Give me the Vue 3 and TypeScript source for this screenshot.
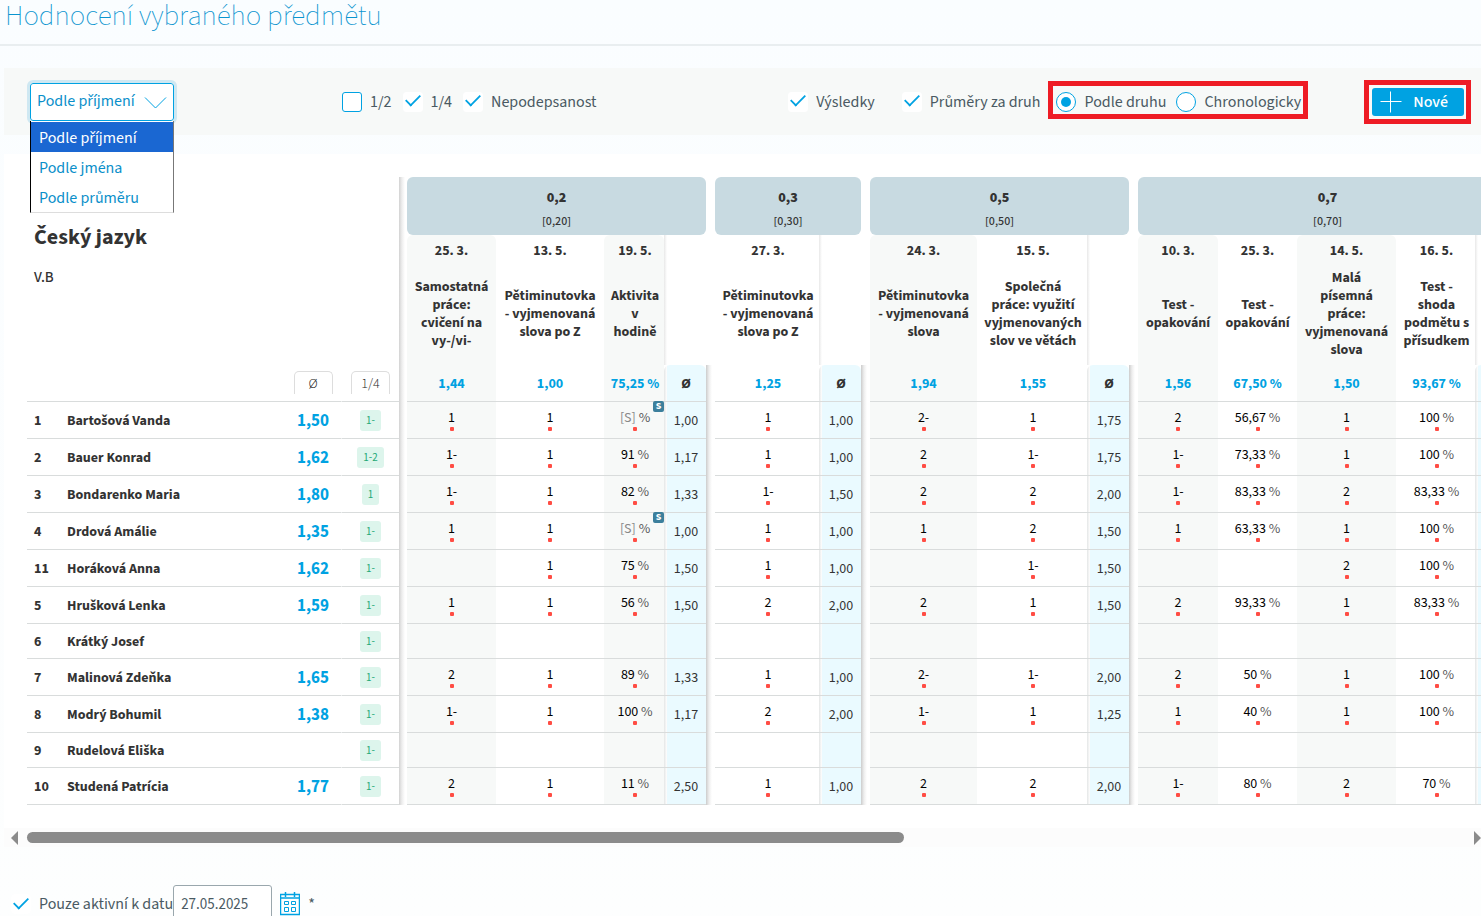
<script setup lang="ts">
import { ref } from 'vue'

interface Column { date: string; title: string; average: string; shaded?: boolean; width: number }
interface Group { weight: string; detail: string; columns: Column[] }
interface Student { no: number; name: string; average: string; quarter: string; grades: string[][]; means: string[] }

const groups: Group[] = [
  {
    weight: '0,2', detail: '[0,20]', columns: [
      { date: '25. 3.', title: 'Samostatná práce: cvičení na vy-/vi-', average: '1,44', shaded: true, width: 89 },
      { date: '13. 5.', title: 'Pětiminutovka\n- vyjmenovaná slova po Z', average: '1,00', width: 108 },
      { date: '19. 5.', title: 'Aktivita v hodině', average: '75,25 %', shaded: true, width: 60 },
    ],
  },
  {
    weight: '0,3', detail: '[0,30]', columns: [
      { date: '27. 3.', title: 'Pětiminutovka\n- vyjmenovaná slova po Z', average: '1,25', width: 104 },
    ],
  },
  {
    weight: '0,5', detail: '[0,50]', columns: [
      { date: '24. 3.', title: 'Pětiminutovka\n- vyjmenovaná slova', average: '1,94', shaded: true, width: 107 },
      { date: '15. 5.', title: 'Společná\npráce: využití vyjmenovaných slov ve větách', average: '1,55', width: 110 },
    ],
  },
  {
    weight: '0,7', detail: '[0,70]', columns: [
      { date: '10. 3.', title: 'Test - opakování', average: '1,56', shaded: true, width: 80 },
      { date: '25. 3.', title: 'Test - opakování', average: '67,50 %', width: 79 },
      { date: '14. 5.', title: 'Malá\npísemná práce: vyjmenovaná slova', average: '1,50', shaded: true, width: 99 },
      { date: '16. 5.', title: 'Test - shoda podmětu s přísudkem', average: '93,67 %', width: 79 },
    ],
  },
]

const students: Student[] = [
  { no: 1, name: 'Bartošová Vanda', average: '1,50', quarter: '1-', grades: [['1', '1', '[S] %'], ['1'], ['2-', '1'], ['2', '56,67 %', '1', '100 %']], means: ['1,00', '1,00', '1,75', ''] },
  { no: 2, name: 'Bauer Konrad', average: '1,62', quarter: '1-2', grades: [['1-', '1', '91 %'], ['1'], ['2', '1-'], ['1-', '73,33 %', '1', '100 %']], means: ['1,17', '1,00', '1,75', ''] },
  { no: 3, name: 'Bondarenko Maria', average: '1,80', quarter: '1', grades: [['1-', '1', '82 %'], ['1-'], ['2', '2'], ['1-', '83,33 %', '2', '83,33 %']], means: ['1,33', '1,50', '2,00', ''] },
  { no: 4, name: 'Drdová Amálie', average: '1,35', quarter: '1-', grades: [['1', '1', '[S] %'], ['1'], ['1', '2'], ['1', '63,33 %', '1', '100 %']], means: ['1,00', '1,00', '1,50', ''] },
  { no: 11, name: 'Horáková Anna', average: '1,62', quarter: '1-', grades: [['', '1', '75 %'], ['1'], ['', '1-'], ['', '', '2', '100 %']], means: ['1,50', '1,00', '1,50', ''] },
  { no: 5, name: 'Hrušková Lenka', average: '1,59', quarter: '1-', grades: [['1', '1', '56 %'], ['2'], ['2', '1'], ['2', '93,33 %', '1', '83,33 %']], means: ['1,50', '2,00', '1,50', ''] },
  { no: 6, name: 'Krátký Josef', average: '', quarter: '1-', grades: [['', '', ''], [''], ['', ''], ['', '', '', '']], means: ['', '', '', ''] },
  { no: 7, name: 'Malinová Zdeňka', average: '1,65', quarter: '1-', grades: [['2', '1', '89 %'], ['1'], ['2-', '1-'], ['2', '50 %', '1', '100 %']], means: ['1,33', '1,00', '2,00', ''] },
  { no: 8, name: 'Modrý Bohumil', average: '1,38', quarter: '1-', grades: [['1-', '1', '100 %'], ['2'], ['1-', '1'], ['1', '40 %', '1', '100 %']], means: ['1,17', '2,00', '1,25', ''] },
  { no: 9, name: 'Rudelová Eliška', average: '', quarter: '1-', grades: [['', '', ''], [''], ['', ''], ['', '', '', '']], means: ['', '', '', ''] },
  { no: 10, name: 'Studená Patrícia', average: '1,77', quarter: '1-', grades: [['2', '1', '11 %'], ['1'], ['2', '2'], ['1-', '80 %', '2', '70 %']], means: ['2,50', '1,00', '2,00', ''] },
]

const sortOptions = ['Podle příjmení', 'Podle jména', 'Podle průměru']
const sort = ref('Podle příjmení')
const half = ref(false)
const quarter = ref(true)
const unsigned = ref(true)
const results = ref(true)
const typeAverages = ref(true)
const order = ref('type')
const activeOnly = ref(true)
const date = ref('27.05.2025')

const value = (g: string) => g.replace(' %', '')
const isPercent = (g: string) => g.endsWith('%')
const isPending = (g: string) => g.startsWith('[S]')
</script>

<template>
  <div class="page">
    <header class="page-head"><h1>Hodnocení vybraného předmětu</h1></header>

    <div class="toolbar">
      <div class="sorter">
        <select v-model="sort" class="sort-select" aria-label="Řazení">
          <option v-for="o in sortOptions" :key="o">{{ o }}</option>
        </select>
        <svg class="chevron" viewBox="0 0 24 14" aria-hidden="true"><path d="M1 1.500 11.500 12 22 1.500" /></svg>
        <ul class="sort-list" role="listbox" aria-label="Řazení">
          <li v-for="o in sortOptions" :key="o" role="option" :aria-selected="o === sort" :class="{ active: o === sort }" @click="sort = o">{{ o }}</li>
        </ul>
      </div>

      <div class="checks">
        <label class="check"><input v-model="half" type="checkbox"><span>1/2</span></label>
        <label class="check"><input v-model="quarter" type="checkbox"><span>1/4</span></label>
        <label class="check"><input v-model="unsigned" type="checkbox"><span>Nepodepsanost</span></label>
      </div>

      <div class="views">
        <label class="check"><input v-model="results" type="checkbox"><span>Výsledky</span></label>
        <label class="check"><input v-model="typeAverages" type="checkbox"><span>Průměry za druh</span></label>
      </div>
      <div class="marked order">
        <label class="check"><input v-model="order" type="radio" name="order" value="type"><span>Podle druhu</span></label>
        <label class="check"><input v-model="order" type="radio" name="order" value="time"><span>Chronologicky</span></label>
      </div>
      <div class="marked create">
        <button type="button" class="new-button">
          <svg viewBox="0 0 22 22" aria-hidden="true"><path d="M0.500 10.500H21.500M10.500 0.500V21.500" /></svg>
          <span>Nové</span>
        </button>
      </div>
    </div>

    <main class="panel">
      <div class="table-view">
        <table class="grades">
          <colgroup>
            <col class="c-no"><col class="c-name"><col class="c-side"><col class="c-side">
            <template v-for="(g, gi) in groups" :key="gi">
              <col :class="gi ? 'c-gap' : 'c-edge'">
              <col v-for="(c, ci) in g.columns" :key="ci" :style="{ width: c.width + 'px' }">
              <col class="c-mean">
            </template>
          </colgroup>
          <thead>
            <tr class="r-group">
              <th colspan="4" rowspan="3" class="subject">
                <h2>Český jazyk</h2>
                <p>V.B</p>
              </th>
              <template v-for="(g, gi) in groups" :key="gi">
                <td :class="gi ? 'gap' : 'edge'"></td>
                <th :colspan="g.columns.length + 1" class="group"><b>{{ g.weight }}</b><span>{{ g.detail }}</span></th>
              </template>
            </tr>
            <tr class="r-date">
              <template v-for="(g, gi) in groups" :key="gi">
                <td :class="gi ? 'gap' : 'edge'"></td>
                <th v-for="(c, ci) in g.columns" :key="ci" :class="{ shaded: c.shaded, last: ci === g.columns.length - 1 }">{{ c.date }}</th>
                <td class="mean-blank"></td>
              </template>
            </tr>
            <tr class="r-title">
              <template v-for="(g, gi) in groups" :key="gi">
                <td :class="gi ? 'gap' : 'edge'"></td>
                <th v-for="(c, ci) in g.columns" :key="ci" :class="{ shaded: c.shaded, last: ci === g.columns.length - 1 }">{{ c.title }}</th>
                <td class="mean-blank"></td>
              </template>
            </tr>
            <tr class="r-average">
              <td></td><td></td>
              <th class="tab-cell split"><span class="tab">Ø</span></th>
              <th class="tab-cell"><span class="tab">1/4</span></th>
              <template v-for="(g, gi) in groups" :key="gi">
                <td :class="gi ? 'gap cast' : 'edge'"></td>
                <th v-for="(c, ci) in g.columns" :key="ci" :class="{ shaded: c.shaded, last: ci === g.columns.length - 1 }">{{ c.average }}</th>
                <th class="mean"><span>Ø</span></th>
              </template>
            </tr>
          </thead>
          <tbody>
            <tr v-for="s in students" :key="s.no" :class="{ empty: !s.average }">
              <td class="no">{{ s.no }}</td>
              <th class="name">{{ s.name }}</th>
              <td class="total split">{{ s.average }}</td>
              <td class="quarter"><span>{{ s.quarter }}</span></td>
              <template v-for="(g, gi) in groups" :key="gi">
                <td :class="gi ? 'gap cast' : 'edge'"></td>
                <td v-for="(c, ci) in g.columns" :key="ci" class="grade" :class="{ shaded: c.shaded, last: ci === g.columns.length - 1 }">
                  <div v-if="s.grades[gi][ci]" class="mark">
                    <span :class="{ pending: isPending(s.grades[gi][ci]) }">{{ value(s.grades[gi][ci]) }}</span><span v-if="isPercent(s.grades[gi][ci])" class="percent"> %</span>
                    <i class="dot"></i>
                  </div>
                  <span v-if="isPending(s.grades[gi][ci])" class="badge">S</span>
                </td>
                <td class="mean"><span>{{ s.means[gi] }}</span></td>
              </template>
            </tr>
          </tbody>
        </table>
      </div>
      <div class="scrollbar" aria-hidden="true">
        <svg class="arrow" viewBox="0 0 7 14"><path d="M7 0V14L0 7Z" /></svg>
        <div class="track"><div class="thumb"></div></div>
        <svg class="arrow" viewBox="0 0 7 14"><path d="M0 0V14L7 7Z" /></svg>
      </div>
    </main>

    <footer class="filter">
      <label class="check"><input v-model="activeOnly" type="checkbox"><span>Pouze aktivní k datu</span></label>
      <input v-model="date" class="date" type="text" aria-label="Datum">
      <button type="button" class="calendar" aria-label="Kalendář">
        <svg viewBox="0 0 20 24" aria-hidden="true">
          <path class="frame" d="M0.500 2.500H19.500V22.500H0.500ZM0.500 6H19.500M5.500 0V5M14.500 0V5" />
          <path d="M4.500 9.500H8.500V12.500H4.500ZM11.500 9.500H15.500V12.500H11.500ZM4.500 15.500H8.500V19.500H4.500ZM11.500 15.500H15.500V19.500H11.500Z" />
        </svg>
      </button>
      <span class="required">*</span>
    </footer>
  </div>
</template>

<style>
html, body { height: 100%; }
body { margin: 0; overflow: hidden; background: #fbfdff; }
</style>

<style scoped>
* { box-sizing: border-box; }
.page {
  min-height: 100vh;
  overflow: hidden;
  background: linear-gradient(#fafdff, #fdfefe);
  color: #333;
  font-family: "Source Sans Pro", "Source Sans 3", "Noto Sans CJK SC", "Noto Sans", sans-serif;
  font-size: 16px;
  line-height: 18px;
}
.page-head { height: 46px; padding-left: 5px; border-bottom: 2px solid #e9eef0; }
h1 { margin: 0; font-size: 29px; line-height: 32px; font-weight: 200; color: #0a94cf; white-space: nowrap; }

.toolbar {
  display: flex;
  align-items: center;
  height: 67px;
  margin: 22px 0 0 4px;
  padding: 0 10px 0 26px;
  background: #f7f9f8;
  color: #4a5a63;
}
.sorter { position: relative; width: 144px; height: 38px; }
.sort-select {
  width: 100%;
  height: 38px;
  padding: 0 6px 2px;
  border: 1px solid #00a2e2;
  border-radius: 3px;
  outline: 3px solid #cfe8f2;
  background: #fff;
  color: #0a8fca;
  font: inherit;
  appearance: none;
}
.chevron { position: absolute; right: 6px; top: 13px; width: 24px; height: 14px; fill: none; stroke: #00a2e2; pointer-events: none; }
.sort-list {
  position: absolute;
  z-index: 2;
  top: 38px;
  left: 0;
  width: 144px;
  margin: 0;
  padding: 1px 0 0;
  list-style: none;
  background: #fff;
  border: 1px solid #777;
  border-top: 0;
  border-left-color: #000;
  border-bottom-color: #ddd;
  color: #0a8fca;
}
.sort-list li { height: 30px; padding: 1px 8px 0; line-height: 31px; }
.sort-list li.active { background: #1a67d2; color: #fff; }

.checks { display: flex; gap: 11px; margin-left: 168px; }
.views { display: flex; gap: 27px; margin-left: auto; margin-right: 8px; }
.check { display: flex; align-items: center; gap: 8px; white-space: nowrap; }
.check input {
  flex: none;
  display: grid;
  place-items: center;
  width: 20px;
  height: 20px;
  margin: 0;
  border: 1px solid #00a2e2;
  border-radius: 3px;
  background: #fff;
  appearance: none;
}
.check input[type="checkbox"]:checked { border-color: #fff; }
.check input[type="checkbox"]:checked::before {
  content: "";
  width: 14px;
  height: 7px;
  margin-bottom: 6px;
  border: solid #00a2e2;
  border-width: 0 0 2px 2px;
  transform: rotate(-45deg) scale(0.9);
}
.check input[type="radio"] { border-radius: 50%; }
.check input[type="radio"]:checked::before { content: ""; width: 10px; height: 10px; border-radius: 50%; background: #00a2e2; }
.marked { border: 5px solid #ee1c25; }
.order { display: flex; gap: 10px; height: 38px; padding: 3px 2px 0 3px; margin: 0 56px 3px 0; }
.create { padding: 3px 2px 3px 3px; }
.new-button {
  display: flex;
  align-items: center;
  gap: 11px;
  height: 28px;
  padding: 0 16px 0 8px;
  border: 0;
  border-radius: 3px;
  background: #00a2e2;
  color: #fff;
  font: inherit;
  font-weight: 500;
}
.new-button svg { width: 22px; height: 22px; fill: none; stroke: #fff; }

.panel { margin: 19px 0 0 4px; background: #fff; }
.table-view { padding: 23px 0 23px 23px; overflow: hidden; }
.grades { width: 1490px; table-layout: fixed; border-collapse: separate; border-spacing: 0; font-size: 14px; }
.grades th, .grades td { padding: 0; text-align: center; }
.c-no { width: 40px; }
.c-name { width: 218px; }
.c-side { width: 57px; }
.c-edge { width: 8px; }
.c-gap { width: 9px; }
.c-mean { width: 42px; }

.grades .subject { padding: 46px 7px 0; text-align: left; vertical-align: top; }
h2 { margin: 0; font-size: 22px; line-height: 28px; font-weight: 700; }
.subject p { margin: 18px 0 0; font-size: 15px; font-weight: 500; }
.edge { background: linear-gradient(90deg, #d2d2d2, #eee 3px, #fff 6px) no-repeat; }
.cast { background: linear-gradient(90deg, #ccc, #eee 3px, #fff 6px) no-repeat; }

.grades .group { height: 58px; padding-top: 7px; border-radius: 6px; background: #c8dae1; }
.group b, .group span { display: block; line-height: 24px; }
.group span { font-size: 12px; font-weight: 500; }
.r-date th { height: 31px; }
.r-date .shaded { border-radius: 6px 6px 0 0; }
.grades .r-title th { height: 99px; padding: 0 4px 3px; white-space: pre-line; }
.r-average th, .r-average td { height: 37px; border-bottom: 1px solid #d9dcdc; }
.grades .r-average th { padding-top: 2px; color: #00a2e2; }
.mean-blank { background: linear-gradient(90deg, #e8e8e8, #fff 3px) no-repeat; }
.shaded { background: #f7f9f8; }
.grades .last { padding-left: 2px; }
.grades .r-title .last { padding: 0 4px 3px 6px; }
.grades .r-average .tab-cell { vertical-align: bottom; padding: 0 0 7px; }
.grades .r-average .tab {
  display: block;
  width: 39px;
  height: 23px;
  margin: 0 auto;
  border: 1px solid #ddd;
  border-bottom: 0;
  border-radius: 5px 5px 0 0;
  line-height: 24px;
  font-weight: 300;
  color: #222;
}

tbody tr { height: 37px; }
tbody tr.empty { height: 35px; }
tbody td, tbody th { border-bottom: 1px solid #d9dcdc; }
.grades .gap, .grades .edge { border-bottom: 0; }
.grades .split { border-right: 1px solid #fff; }
.grades .no, .grades .name { padding: 2px 0 0 7px; text-align: left; font-weight: 700; }
.grades .name { padding-left: 0; }
.grades .total { padding-top: 2px; font-size: 17px; font-weight: 700; color: #00a2e2; }
.quarter span {
  display: inline-block;
  height: 21px;
  padding: 0 6px;
  border-radius: 3px;
  background: #ddf5ec;
  color: #1fa876;
  font-size: 11px;
  line-height: 21px;
}
.grade { position: relative; color: #000; }
.mark { line-height: 17px; }
.percent { color: #555; }
.pending { color: #888; }
.dot { display: block; width: 4px; height: 4px; margin: 0 auto; border-radius: 1px; background: #ff4d44; }
.badge {
  position: absolute;
  top: -1px;
  right: 0;
  width: 11px;
  height: 11px;
  border-radius: 2px;
  background: #3c7f9c;
  color: #fff;
  font-size: 10px;
  line-height: 11px;
  font-weight: 700;
}
.grades .mean { padding-top: 2px; background: linear-gradient(90deg, #e4e6e6, #fff 3px, #eafaff 3px); }
.mean span { display: block; padding-left: 2px; }
.grades .r-average .mean { border-top-left-radius: 6px; border-top-right-radius: 6px; color: #333; }

.scrollbar { display: flex; align-items: center; height: 19px; padding: 0 0 0 7px; background: #fcfcfc; }
.arrow { flex: none; width: 7px; height: 14px; fill: #8b8b8b; }
.track { flex: 1; padding: 0 9px; }
.thumb { width: 61%; height: 11px; border-radius: 6px; background: #8b8b8b; }

.filter { display: flex; align-items: center; height: 38px; margin: 38px 0 0 11px; color: #4a5a63; }
.date {
  width: 99px;
  height: 38px;
  padding: 0 7px;
  border: 1px solid #9aa7ad;
  border-radius: 3px;
  background: #fff;
  color: #4a5a63;
  font: inherit;
  font-size: 15px;
}
.calendar { width: 20px; height: 24px; margin: 0 8px; padding: 0; border: 0; background: none; }
.calendar svg { display: block; width: 20px; height: 24px; fill: none; stroke: #00a2e2; }
.calendar .frame { stroke-width: 1.5; }
</style>
